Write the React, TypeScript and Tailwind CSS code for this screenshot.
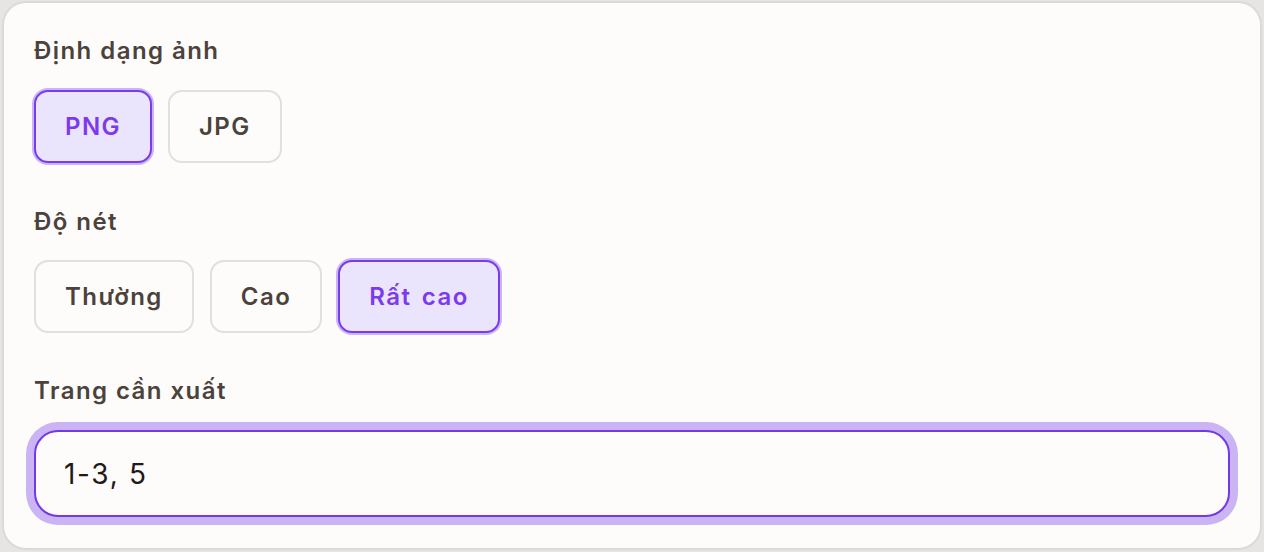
import { useState } from "react";

const formats = ["PNG", "JPG"];
const qualities = ["Thường", "Cao", "Rất cao"];

function Option({
  label,
  active,
  onClick,
}: {
  label: string;
  active: boolean;
  onClick: () => void;
}) {
  return (
    <button
      onClick={onClick}
      className={
        active
          ? "rounded-[14px] border-2 border-[#7c3aed] bg-[#ebe4fd] px-[29px] py-[18px] text-[24px] leading-[33px] font-semibold tracking-[0.06em] [word-spacing:3px] text-[#7c3aed] ring-2 ring-[#c9b5f7]"
          : "rounded-[14px] border-2 border-[#e2dfdc] bg-[#fdfcfb] px-[29px] py-[18px] text-[24px] leading-[33px] font-semibold tracking-[0.06em] [word-spacing:3px] text-[#4b423b]"
      }
    >
      {label}
    </button>
  );
}

export default function App() {
  const [format, setFormat] = useState("PNG");
  const [quality, setQuality] = useState("Rất cao");
  const [pages, setPages] = useState("1-3, 5");

  return (
    <div
      className="min-h-screen bg-[#e6e5e3] p-[1px] pr-[2px]"
      style={{ fontFamily: "Inter, 'Noto Sans', sans-serif" }}
    >
      <div className="ml-[1px] flex h-[549px] flex-col rounded-[24px] border-2 border-[#dcdad7] bg-[#fdfcfb] px-[30px] pt-[32px]">
        <h3 className="text-[24px] leading-[32px] font-semibold tracking-[0.06em] text-[#4b423b]">
          Định dạng ảnh
        </h3>
        <div className="mt-[23px] flex gap-[16px]">
          {formats.map((f) => (
            <Option
              key={f}
              label={f}
              active={format === f}
              onClick={() => setFormat(f)}
            />
          ))}
        </div>

        <h3 className="mt-[43px] text-[24px] leading-[32px] font-semibold tracking-[0.06em] text-[#4b423b]">
          Độ nét
        </h3>
        <div className="mt-[22px] flex gap-[16px]">
          {qualities.map((q) => (
            <Option
              key={q}
              label={q}
              active={quality === q}
              onClick={() => setQuality(q)}
            />
          ))}
        </div>

        <h3 className="mt-[42px] text-[24px] leading-[32px] font-semibold tracking-[0.06em] text-[#4b423b]">
          Trang cần xuất
        </h3>
        <input
          value={pages}
          onChange={(e) => setPages(e.target.value)}
          className="mt-[23px] h-[87px] w-full rounded-[24px] border-2 border-[#7438e8] bg-[#fdfcfb] px-[28px] text-[28px] tracking-[0.06em] text-[#1f1a17] outline-none ring-8 ring-[#cab4f4]"
        />
      </div>
    </div>
  );
}
